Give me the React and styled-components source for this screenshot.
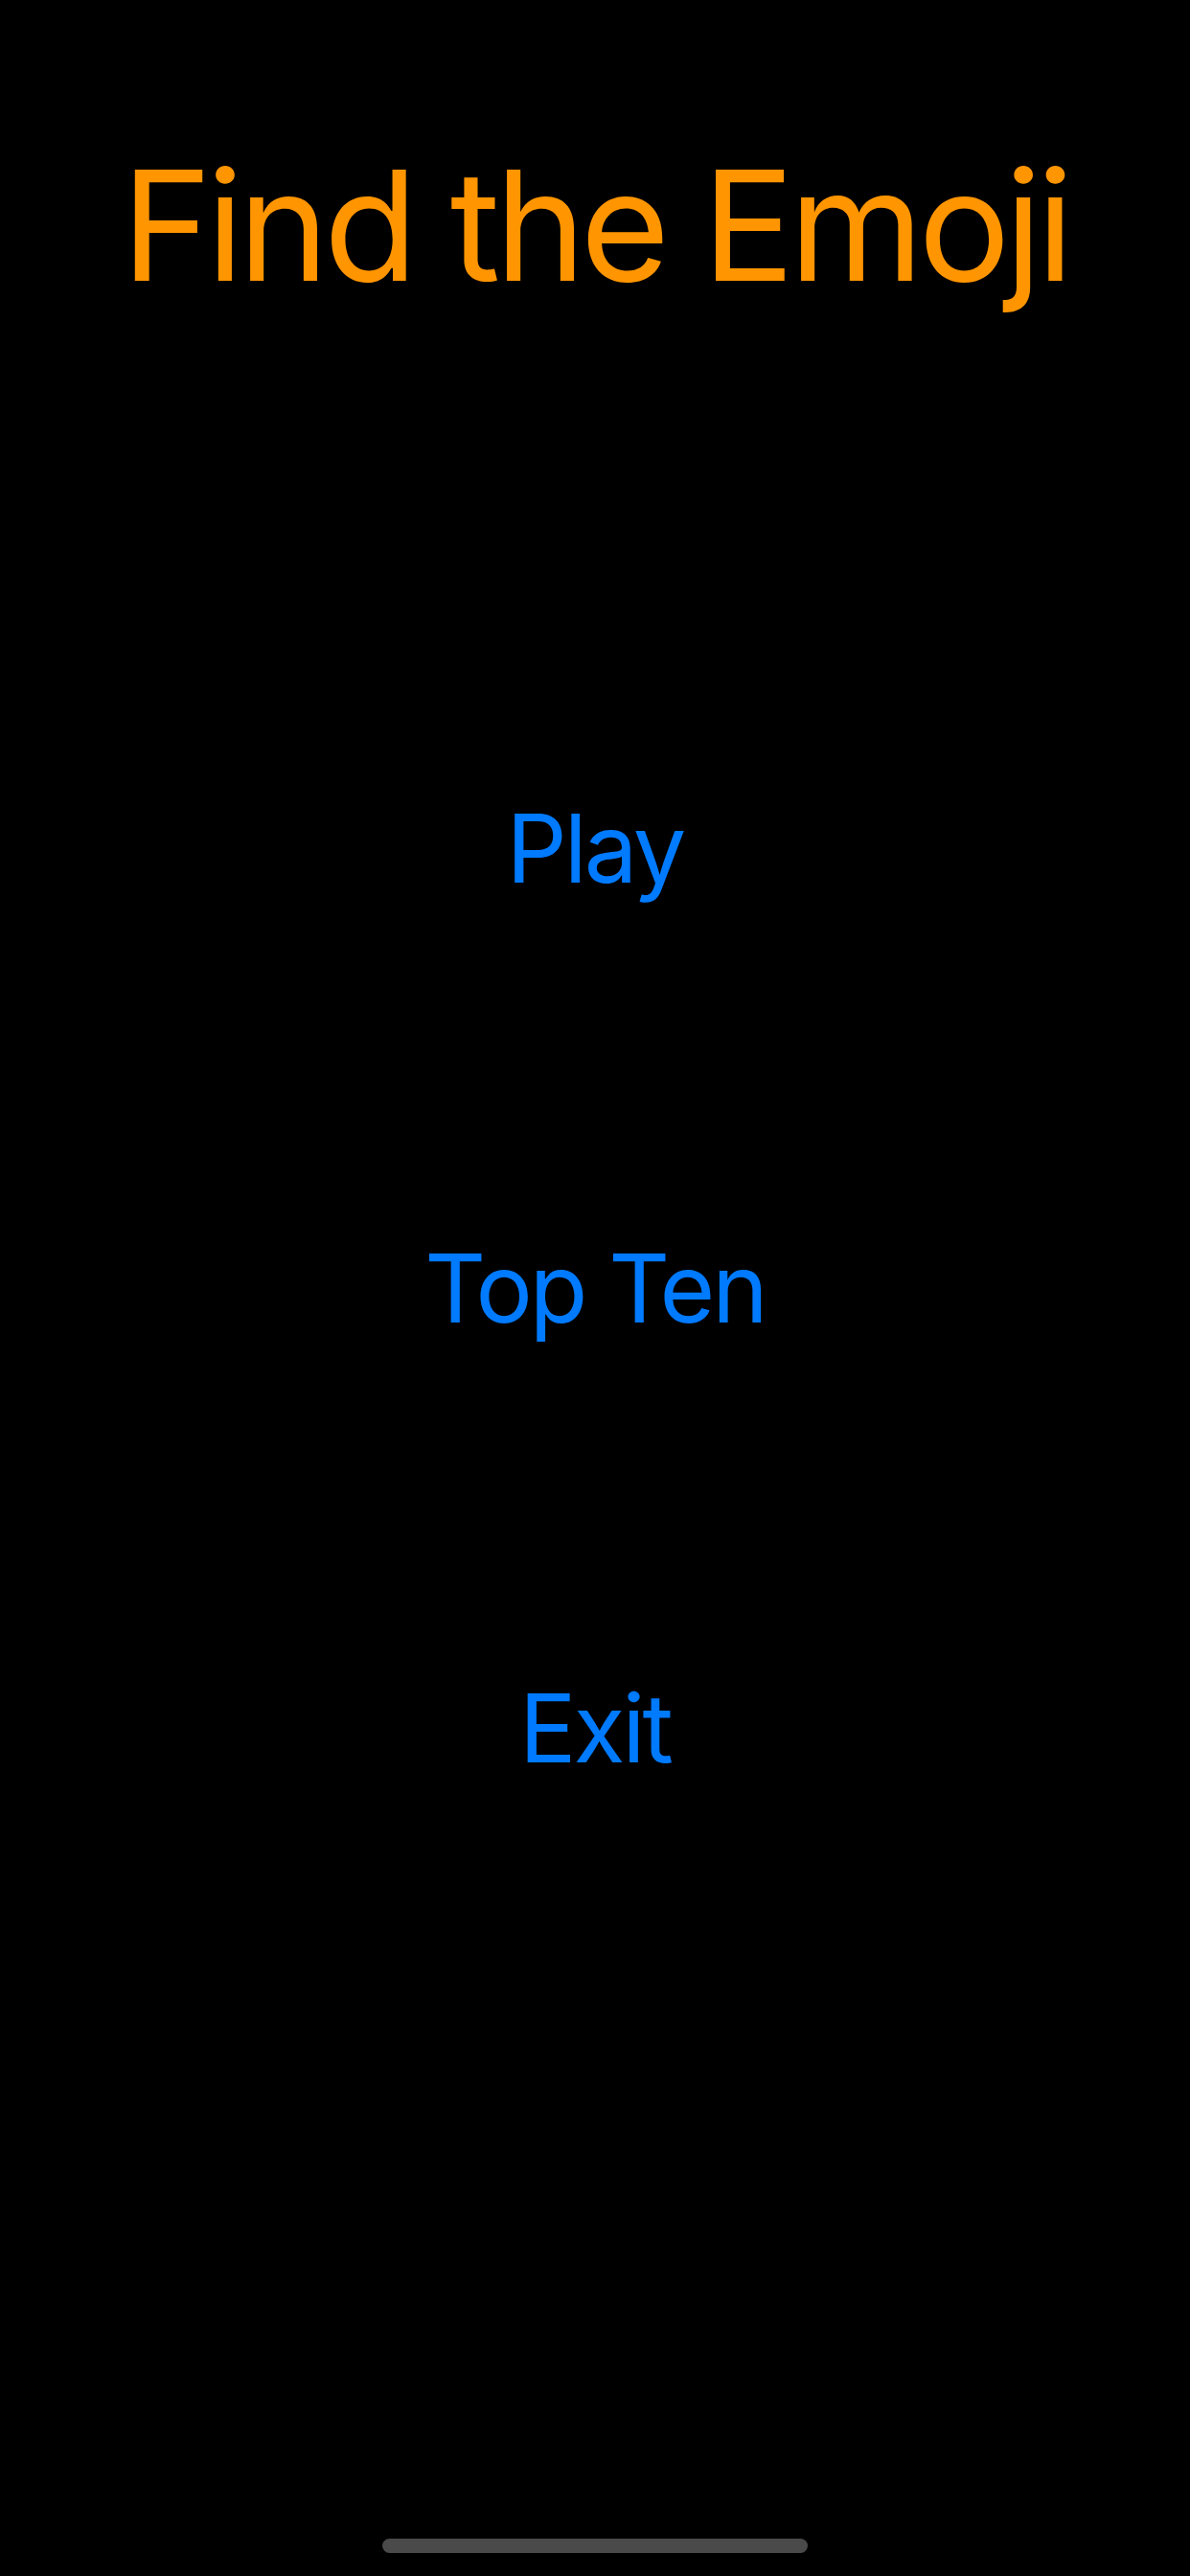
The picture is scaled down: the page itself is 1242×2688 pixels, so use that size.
import React from "react";
import styled, { createGlobalStyle } from "styled-components";

const GlobalStyle = createGlobalStyle`
  html, body {
    margin: 0;
    padding: 0;
    background: #000;
  }
  * {
    box-sizing: border-box;
  }
`;

const Screen = styled.div`
  display: flex;
  flex-direction: column;
  align-items: center;
  width: 1242px;
  min-height: 2688px;
  padding-top: 155px;
  background: #000;
  font-family: Inter, "Liberation Sans", Arial, sans-serif;
`;

const Title = styled.h1`
  margin: 0;
  font-size: 160px;
  line-height: 160px;
  font-weight: 400;
  letter-spacing: -5.5px;
  color: #ff9500;
`;

const Menu = styled.nav`
  display: flex;
  flex-direction: column;
  align-items: center;
  gap: 360px;
  margin-top: 521px;
`;

const MenuButton = styled.button`
  padding: 0;
  border: none;
  background: none;
  font-family: inherit;
  font-size: 99px;
  line-height: 99px;
  font-weight: 400;
  letter-spacing: -3px;
  color: #007aff;
  cursor: pointer;
`;

const HomeIndicator = styled.div`
  margin-top: auto;
  margin-bottom: 24px;
  width: 444px;
  height: 15px;
  border-radius: 8px;
  background: #4a4a4a;
`;

const items = ["Play", "Top Ten", "Exit"];

export default function App() {
  return <>
    <GlobalStyle />
    <Screen>
      <Title>Find the Emoji</Title>
      <Menu>
        {items.map((label) => (
          <MenuButton key={label}>{label}</MenuButton>
        ))}
      </Menu>
      <HomeIndicator />
    </Screen>
  </>;
}
